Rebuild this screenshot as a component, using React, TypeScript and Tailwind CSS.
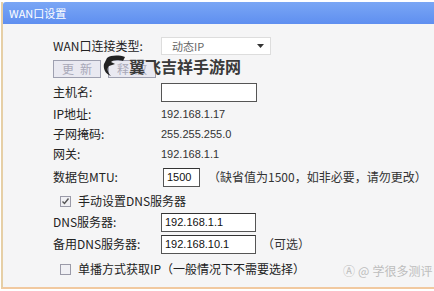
import React from "react";

const cjk = { fontFamily: '"Noto Sans CJK SC", "Liberation Sans", sans-serif' };
const num = { fontFamily: '"Liberation Sans", "Noto Sans CJK SC", sans-serif' };

function Row({ label, children, className = "" }: { label: string; children?: React.ReactNode; className?: string }) {
  return (
    <div className={`flex items-center h-[20px] ${className}`}>
      <div className="w-[108px] shrink-0 text-[12px] text-[#222]">{label}</div>
      {children}
    </div>
  );
}

function TextBox({ value, w }: { value: string; w: string }) {
  return (
    <div
      className={`${w} h-[19px] bg-white border border-[#555] border-t-[#333] flex items-center px-[3px] text-[11px] text-[#111]`}
      style={num}
    >
      {value}
    </div>
  );
}

function Check({ checked }: { checked?: boolean }) {
  return (
    <div className="w-[11px] h-[11px] border border-[#9a9aa8] bg-[#f0f0f4] flex items-center justify-center">
      {checked && (
        <svg width="9" height="9" viewBox="0 0 9 9">
          <path d="M1.5 4.5 L3.5 6.5 L7.5 1.5" stroke="#555" strokeWidth="1.4" fill="none" />
        </svg>
      )}
    </div>
  );
}

export default function App() {
  return (
    <div className="w-[434px] h-[291px] bg-white overflow-hidden relative" style={cjk}>
      <div className="ml-[1px] mt-[2px] w-[433px] h-[287px] border-l-2 border-b-2 border-l-[#e6cfa6] border-b-[#f1c9a0] bg-[#f5f5f6] flex flex-col">
        <div className="h-[22px] bg-gradient-to-b from-[#7aa6f5] to-[#5f8ff0] rounded-tl-[3px] flex items-center pl-[6px] text-white text-[11px]">
          WAN口设置
        </div>
        <div className="pl-[50px] pt-[12px] flex flex-col">
          <Row label="WAN口连接类型:" className="text-[11px]">
            <div className="w-[110px] h-[18px] bg-white border border-[#ddd] flex items-center justify-between pl-[10px] pr-[6px] text-[11px] text-[#666]">
              <span>动态IP</span>
              <svg width="7" height="5" viewBox="0 0 7 5"><path d="M0 0 H7 L3.5 4 Z" fill="#333" /></svg>
            </div>
          </Row>
          <div className="flex items-center gap-[7px] mt-[3px] h-[20px]">
            <div className="w-[48px] h-[18px] bg-[#e9e9f1] border border-[#9ea0b0] text-[12px] text-[#a8a8b8] flex items-center justify-center tracking-[6px] pl-[6px]">更新</div>
            <div className="w-[48px] h-[18px] bg-[#e9e9f1] border border-[#9ea0b0] text-[12px] text-[#a8a8b8] flex items-center justify-center tracking-[6px] pl-[6px]">释放</div>
          </div>
          <Row label="主机名:" className="mt-[3px]">
            <div className="w-[96px] h-[19px] bg-white border border-[#555]" />
          </Row>
          <Row label="IP地址:" className="mt-[2px]">
            <span className="text-[11px] text-[#333]" style={num}>192.168.1.17</span>
          </Row>
          <Row label="子网掩码:" className="mt-[0px]">
            <span className="text-[11px] text-[#333]" style={num}>255.255.255.0</span>
          </Row>
          <Row label="网关:" className="mt-[0px]">
            <span className="text-[11px] text-[#333]" style={num}>192.168.1.1</span>
          </Row>
          <Row label="数据包MTU:" className="mt-[3px]">
            <div className="ml-[2px]">
              <TextBox value="1500" w="w-[37px]" />
            </div>
            <span className="ml-[8px] text-[12px] text-[#333]">（缺省值为1500，如非必要，请勿更改）</span>
          </Row>
          <div className="flex items-center h-[20px] mt-[4px] pl-[7px] gap-[7px] text-[12px] text-[#222]">
            <Check checked />
            <span>手动设置DNS服务器</span>
          </div>
          <Row label="DNS服务器:" className="mt-[1px]">
            <TextBox value="192.168.1.1" w="w-[95px]" />
          </Row>
          <Row label="备用DNS服务器:" className="mt-[2px]">
            <TextBox value="192.168.10.1" w="w-[95px]" />
            <span className="ml-[6px] text-[12px] text-[#333]">（可选）</span>
          </Row>
          <div className="flex items-center h-[20px] mt-[5px] pl-[7px] gap-[7px] text-[12px] text-[#222]">
            <Check />
            <span>单播方式获取IP（一般情况下不需要选择）</span>
          </div>
        </div>
      </div>
      {/* watermark over the buttons */}
      <div className="absolute left-[101px] top-[54px] flex items-center gap-[2px]">
        <svg width="26" height="24" viewBox="0 0 26 24">
          <path d="M6 4 C10 1 18 1 24 3 L22 7 C16 5 12 6 10 8 L14 10 L8 12 C6 14 6 18 10 22 C4 20 2 14 3 10 Z" fill="#222" />
        </svg>
        <span className="text-[16px] font-bold text-[#3a3a3a] leading-none">翼飞吉祥手游网</span>
      </div>
      <div className="absolute left-[343px] top-[262px] flex items-center gap-[3px] text-[12px] text-[#bdbdbd]">
        <span>Ⓐ</span>
        <span>@</span>
        <span>学很多测评</span>
      </div>
    </div>
  );
}
